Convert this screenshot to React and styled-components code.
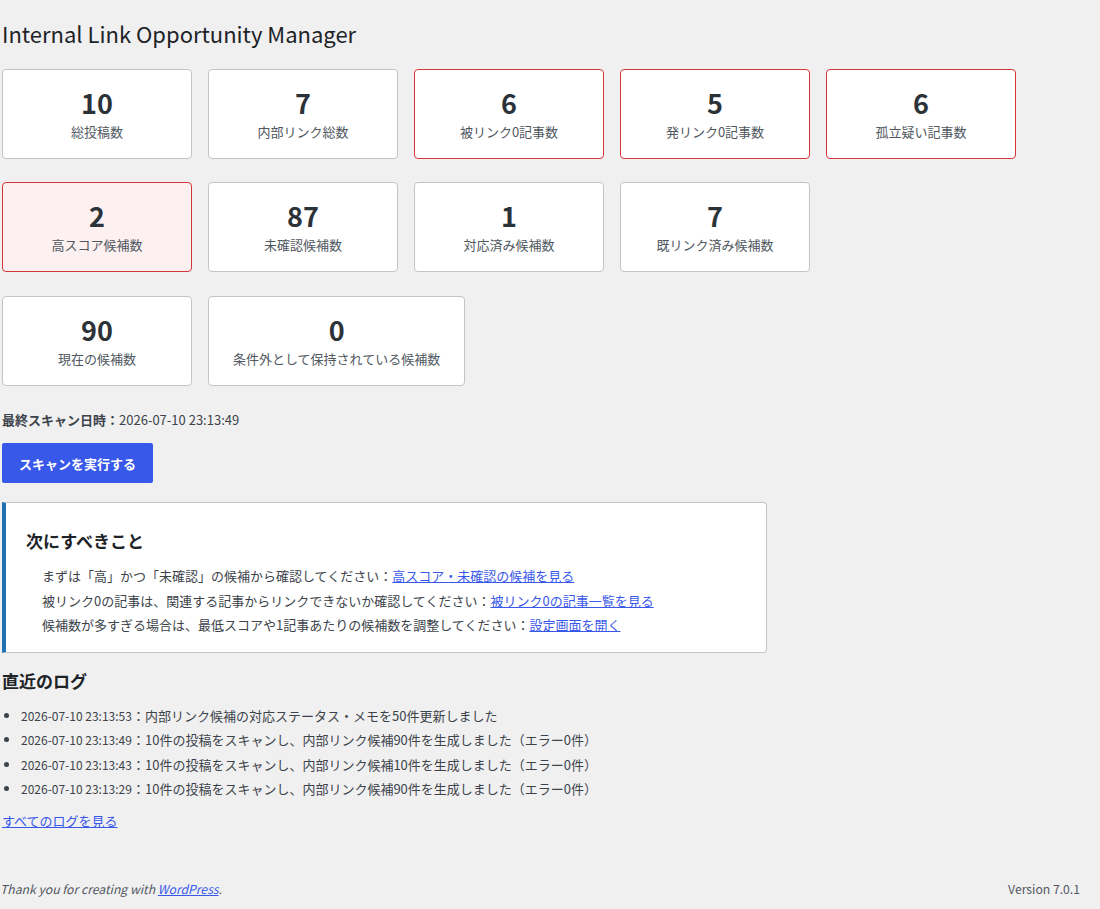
import React from "react";
import styled, { createGlobalStyle, css } from "styled-components";

const GlobalStyle = createGlobalStyle`
  html, body { margin: 0; padding: 0; background: #f0f0f1; }
  body {
    font-family: "Noto Sans CJK JP", "Noto Sans", sans-serif;
    font-size: 13px;
    line-height: 1.4em;
    color: #3c434a;
  }
  * { box-sizing: border-box; }
`;

const Page = styled.div`
  min-height: 100vh;
  display: flex;
  flex-direction: column;
`;

const Wrap = styled.div`
  padding: 10px 20px 0 2px;
`;

const Title = styled.h1`
  margin: 0 0 16px;
  padding: 9px 0 4px;
  font-size: 22px;
  font-weight: 400;
  line-height: 29.9px;
  color: #1d2327;
`;

const CardRow = styled.div`
  display: flex;
  flex-wrap: wrap;
  gap: 16px;
  margin-bottom: 23.5px;
`;

const Card = styled.div`
  min-width: 190px;
  height: 90px;
  padding: 17px 24px 0;
  background: #fff;
  border: 1px solid #c3c4c7;
  border-radius: 4px;
  text-align: center;
  ${(p) =>
    p.$tone === "alert" &&
    css`
      border-color: #d63638;
    `}
  ${(p) =>
    p.$tone === "highlight" &&
    css`
      border-color: #d63638;
      background: #fcf0f1;
    `}
`;

const CardValue = styled.div`
  font-size: 27px;
  font-weight: 600;
  line-height: 32px;
  color: #2c3338;
`;

const CardLabel = styled.div`
  margin-top: 3px;
  font-size: 13px;
  line-height: 20px;
  color: #50575e;
`;

const ScanInfo = styled.p`
  margin: 0 0 13px;
  padding-top: 1px;
  line-height: 20px;
  strong { font-weight: 700; color: #3c434a; }
`;

const PrimaryButton = styled.button`
  height: 40px;
  padding: 0 17px;
  border: 0;
  border-radius: 2px;
  background: #3858e9;
  color: #fff;
  font-family: inherit;
  font-size: 13px;
  font-weight: 700;
  cursor: pointer;
`;

const Notice = styled.div`
  margin-top: 19px;
  width: 765px;
  background: #fff;
  border: 1px solid #c3c4c7;
  border-left: 4px solid #2271b1;
  border-radius: 0 4px 4px 0;
  padding: 26px 20px 14px;
`;

const SectionTitle = styled.h2`
  margin: 0;
  font-size: 17px;
  font-weight: 700;
  line-height: 24px;
  color: #1d2327;
`;

const StepList = styled.ul`
  list-style: none;
  margin: 11px 0 0;
  padding: 0 0 0 16px;
  li { line-height: 24.5px; margin: 0; }
`;

const Link = styled.a`
  color: #3858e9;
  text-decoration: underline;
`;

const LogSection = styled.section`
  margin-top: 16px;
`;

const LogList = styled.ul`
  list-style: disc;
  margin: 11px 0 0;
  padding: 0 0 0 19px;
  li { line-height: 24.5px; margin: 0; }
  li::marker { color: #3c434a; }
`;

const LogDate = styled.span`
  font-size: 12px;
`;

const MoreLink = styled.p`
  margin: 9px 0 0;
  line-height: 20px;
`;

const Footer = styled.footer`
  margin-top: auto;
  display: flex;
  justify-content: space-between;
  padding: 10px 20px 10px 0;
  line-height: 20px;
  font-size: 12.2px;
  color: #50575e;
`;

const FooterThanks = styled.span`
  font-style: italic;
`;

const stats1 = [
  { v: "10", l: "総投稿数" },
  { v: "7", l: "内部リンク総数" },
  { v: "6", l: "被リンク0記事数", t: "alert" },
  { v: "5", l: "発リンク0記事数", t: "alert" },
  { v: "6", l: "孤立疑い記事数", t: "alert" },
];
const stats2 = [
  { v: "2", l: "高スコア候補数", t: "highlight" },
  { v: "87", l: "未確認候補数" },
  { v: "1", l: "対応済み候補数" },
  { v: "7", l: "既リンク済み候補数" },
];
const stats3 = [
  { v: "90", l: "現在の候補数" },
  { v: "0", l: "条件外として保持されている候補数" },
];

const logs = [
  ["2026-07-10 23:13:53", "内部リンク候補の対応ステータス・メモを50件更新しました"],
  ["2026-07-10 23:13:49", "10件の投稿をスキャンし、内部リンク候補90件を生成しました（エラー0件）"],
  ["2026-07-10 23:13:43", "10件の投稿をスキャンし、内部リンク候補10件を生成しました（エラー0件）"],
  ["2026-07-10 23:13:29", "10件の投稿をスキャンし、内部リンク候補90件を生成しました（エラー0件）"],
];

function Row({ items }) {
  return (
    <CardRow>
      {items.map((s, i) => (
        <Card key={i} $tone={s.t}>
          <CardValue>{s.v}</CardValue>
          <CardLabel>{s.l}</CardLabel>
        </Card>
      ))}
    </CardRow>
  );
}

export default function App() {
  return (
    <>
      <GlobalStyle />
      <Page>
        <Wrap>
          <Title>Internal Link Opportunity Manager</Title>
          <Row items={stats1} />
          <Row items={stats2} />
          <Row items={stats3} />
          <ScanInfo>
            <strong>最終スキャン日時：</strong>2026-07-10 23:13:49
          </ScanInfo>
          <PrimaryButton>スキャンを実行する</PrimaryButton>
          <Notice>
            <SectionTitle>次にすべきこと</SectionTitle>
            <StepList>
              <li>
                まずは「高」かつ「未確認」の候補から確認してください：
                <Link href="#">高スコア・未確認の候補を見る</Link>
              </li>
              <li>
                被リンク0の記事は、関連する記事からリンクできないか確認してください：
                <Link href="#">被リンク0の記事一覧を見る</Link>
              </li>
              <li>
                候補数が多すぎる場合は、最低スコアや1記事あたりの候補数を調整してください：
                <Link href="#">設定画面を開く</Link>
              </li>
            </StepList>
          </Notice>
          <LogSection>
            <SectionTitle>直近のログ</SectionTitle>
            <LogList>
              {logs.map(([d, m], i) => (
                <li key={i}>
                  <LogDate>{d}</LogDate>：{m}
                </li>
              ))}
            </LogList>
            <MoreLink>
              <Link href="#">すべてのログを見る</Link>
            </MoreLink>
          </LogSection>
        </Wrap>
        <Footer>
          <FooterThanks>
            Thank you for creating with <Link href="#">WordPress</Link>.
          </FooterThanks>
          <span>Version 7.0.1</span>
        </Footer>
      </Page>
    </>
  );
}
